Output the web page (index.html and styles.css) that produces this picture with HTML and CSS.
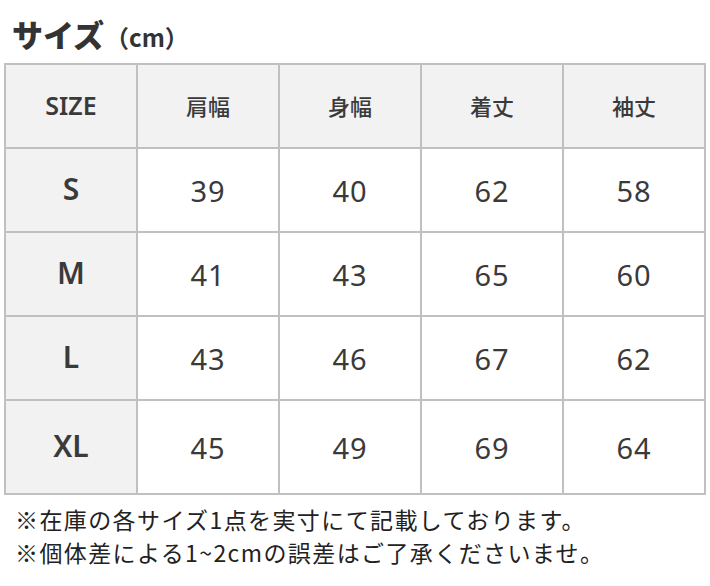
FILE: index.html
```html
<!DOCTYPE html>
<html lang="ja">
<head>
<meta charset="utf-8">
<title>サイズ</title>
<link rel="stylesheet" href="styles.css">
</head>
<body>
<h1 class="title">サイズ<span class="unit">（cm）</span></h1>
<div class="size-table">
  <div class="cell head label">SIZE</div>
  <div class="cell head">肩幅</div>
  <div class="cell head">身幅</div>
  <div class="cell head">着丈</div>
  <div class="cell head">袖丈</div>

  <div class="cell side">S</div>
  <div class="cell num">39</div>
  <div class="cell num">40</div>
  <div class="cell num">62</div>
  <div class="cell num">58</div>

  <div class="cell side">M</div>
  <div class="cell num">41</div>
  <div class="cell num">43</div>
  <div class="cell num">65</div>
  <div class="cell num">60</div>

  <div class="cell side">L</div>
  <div class="cell num">43</div>
  <div class="cell num">46</div>
  <div class="cell num">67</div>
  <div class="cell num">62</div>

  <div class="cell side">XL</div>
  <div class="cell num">45</div>
  <div class="cell num">49</div>
  <div class="cell num">69</div>
  <div class="cell num">64</div>
</div>
<div class="notes">
  <p class="note">※在庫の各サイズ1点を実寸にて記載しております。</p>
  <p class="note">※個体差による1~2cmの誤差はご了承くださいませ。</p>
</div>
</body>
</html>
```

FILE: styles.css
```css
html, body {
  margin: 0;
  padding: 0;
  background: #ffffff;
}

body {
  color: #333333;
  font-family: "Noto Sans", "Noto Sans CJK JP", sans-serif;
}

.title {
  margin: 0;
  height: 63px;
  box-sizing: border-box;
  padding: 14px 0 0 12px;
  font-family: "Noto Sans CJK JP", sans-serif;
  font-size: 31px;
  font-weight: 900;
  line-height: 40px;
  color: #333333;
}

.unit {
  font-size: 24px;
  font-weight: 700;
  margin-left: 1px;
}

.size-table {
  margin-left: 4px;
  width: 702px;
  box-sizing: border-box;
  display: grid;
  grid-template-columns: 132px repeat(4, 142px);
  grid-template-rows: 84px 84px 84px 84px 94px;
  border-left: 2px solid #c0c0c0;
  border-top: 2px solid #c0c0c0;
}

.cell {
  box-sizing: border-box;
  border-right: 2px solid #c0c0c0;
  border-bottom: 2px solid #c0c0c0;
  display: flex;
  align-items: center;
  justify-content: center;
  color: #3a3a3a;
}

.head {
  background: #f2f2f2;
  font-family: "Noto Sans CJK JP", sans-serif;
  font-size: 22px;
  font-weight: 500;
  padding-bottom: 2px;
}

.head.label {
  font-family: "Noto Sans", sans-serif;
  font-size: 25px;
  font-weight: 600;
}

.side {
  background: #f2f2f2;
  font-family: "Noto Sans", sans-serif;
  font-size: 30px;
  font-weight: 600;
  padding-bottom: 4px;
}

.num {
  font-family: "Noto Sans", sans-serif;
  font-size: 29px;
  font-weight: 400;
  letter-spacing: 1px;
}

.notes {
  padding: 8px 0 0 15px;
}

.note {
  margin: 0;
  font-family: "Noto Sans CJK JP", sans-serif;
  font-size: 23px;
  line-height: 33px;
  letter-spacing: 1.4px;
  color: #222222;
}
```
